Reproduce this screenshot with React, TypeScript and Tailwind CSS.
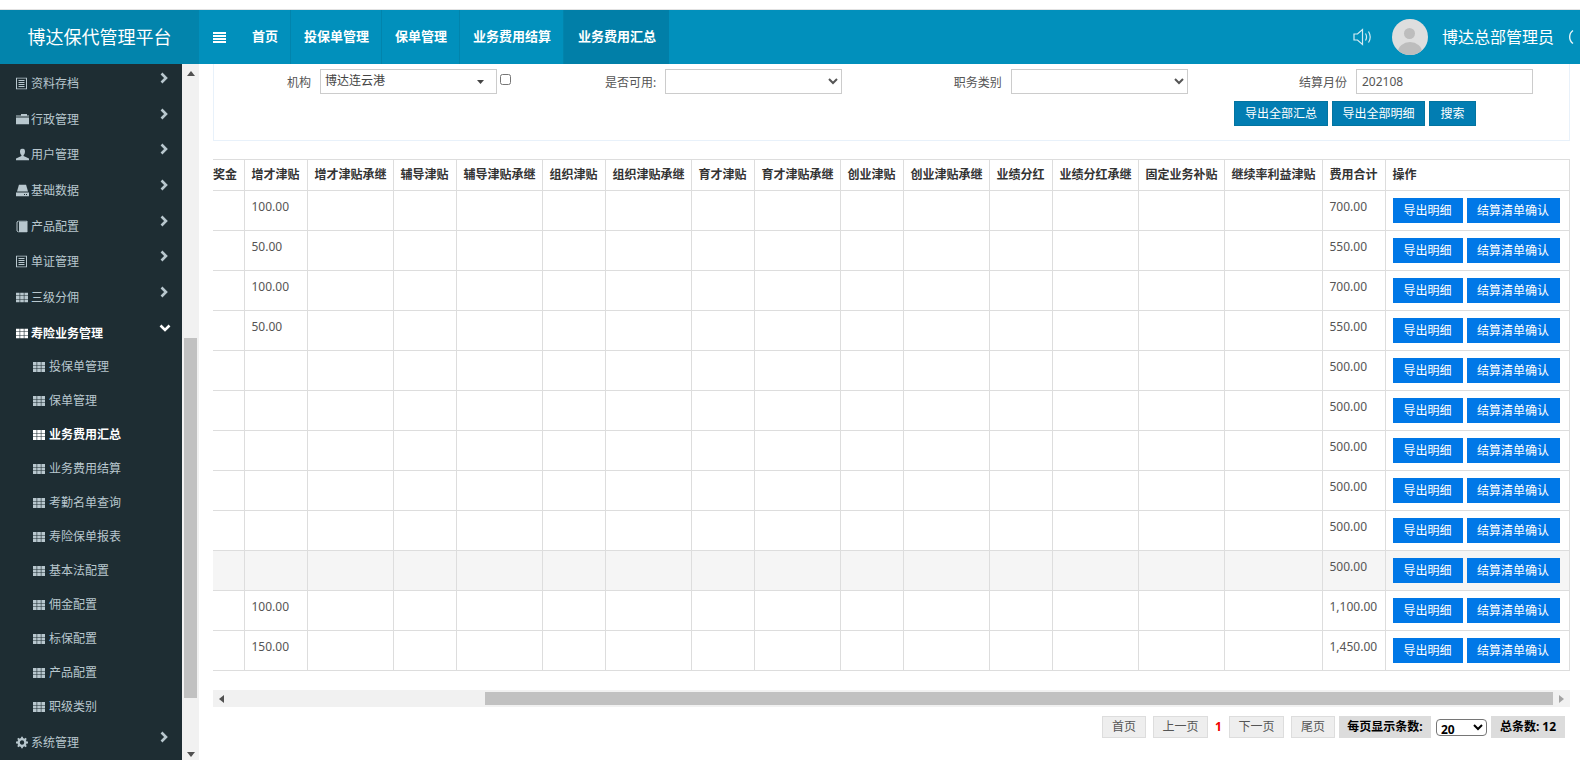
import React from "react";

const FONT = '"Noto Sans", "Noto Sans CJK SC", sans-serif';

function Th({ active }: { active?: boolean }) {
  const c = active ? "#ffffff" : "#b8c7ce";
  const xs = [0, 4.2, 8.4];
  const ys = [0, 3.5, 7];
  return (
    <svg width="12" height="10" viewBox="0 0 12 10" className="shrink-0">
      {xs.map((x) => ys.map((y) => <rect key={`${x}-${y}`} x={x} y={y} width="3.6" height="3" fill={c} />))}
    </svg>
  );
}
function ListAlt() {
  return (
    <svg width="12" height="12" viewBox="0 0 12 12" className="shrink-0">
      <rect x="0.5" y="0.5" width="10" height="11" fill="none" stroke="#b8c7ce" />
      <path d="M2.5 3h6M2.5 5h6M2.5 7h6M2.5 9h6" stroke="#b8c7ce" />
    </svg>
  );
}
function Folder() {
  return (
    <svg width="13" height="11" viewBox="0 0 13 11" className="shrink-0">
      <path d="M1 2h4V0.5h6V2h2v1H0V2z M0 4h13v7H0z" fill="#b8c7ce" />
    </svg>
  );
}
function User() {
  return (
    <svg width="13" height="12" viewBox="0 0 13 12" className="shrink-0">
      <path d="M6.500 0C8.200 0 9 1.300 9 3c0 1.500-.6 3-1.400 3.600v1L13 10v2H0v-2l5.400-2.400v-1C4.600 6 4 4.500 4 3c0-1.700.8-3 2.500-3z" fill="#b8c7ce" />
    </svg>
  );
}
function Hdd() {
  return (
    <svg width="13" height="12" viewBox="0 0 13 12" className="shrink-0">
      <path d="M3 0h7l2 7H1z" fill="#b8c7ce" />
      <rect x="0" y="8" width="13" height="4" fill="#b8c7ce" />
      <rect x="8" y="9.500" width="1" height="1" fill="#1e2d33" />
      <rect x="10" y="9.500" width="1" height="1" fill="#1e2d33" />
    </svg>
  );
}
function Book() {
  return (
    <svg width="12" height="12" viewBox="0 0 12 12" className="shrink-0">
      <path d="M1 1.500L2.500 0.500H11V11.500H2.500L1 10.500z" fill="none" stroke="#b8c7ce" />
      <rect x="3" y="1" width="8" height="10.500" fill="#b8c7ce" />
    </svg>
  );
}
function Cog() {
  return (
    <svg width="12" height="12" viewBox="0 0 12 12" className="shrink-0">
      <circle cx="6" cy="6" r="3.400" fill="none" stroke="#b8c7ce" strokeWidth="2.400" />
      <path d="M6 0v2.400M6 9.600V12M0 6h2.400M9.600 6H12M1.800 1.800l1.700 1.700M8.500 8.500l1.700 1.700M10.200 1.800L8.500 3.500M3.500 8.500l-1.700 1.700" stroke="#b8c7ce" strokeWidth="1.800" />
    </svg>
  );
}
function ChevronR() {
  return (
    <svg width="8" height="12" viewBox="0 0 8 12" className="shrink-0 -translate-y-1">
      <path d="M1.500 1.500L6 6l-4.500 4.500" fill="none" stroke="#b8c7ce" strokeWidth="2.600" />
    </svg>
  );
}
function ChevronD() {
  return (
    <svg width="12" height="8" viewBox="0 0 12 8" className="shrink-0 -translate-y-1">
      <path d="M1.500 1.500L6 6l4.500-4.500" fill="none" stroke="#ffffff" strokeWidth="2.600" />
    </svg>
  );
}

function Top({ icon, label, open }: { icon: React.ReactNode; label: string; open?: boolean }) {
  return (
    <div className={`flex h-[35.7px] items-center pl-4 ${open ? "pr-[11px] text-white font-bold" : "pr-[14px] text-[#b8c7ce]"}`}>
      <span className="flex w-[15px] shrink-0 translate-y-[1.5px] items-center">{icon}</span>
      <span className="flex-1 translate-y-[1.5px]">{label}</span>
      {open ? <ChevronD /> : <ChevronR />}
    </div>
  );
}
function Child({ label, active }: { label: string; active?: boolean }) {
  return (
    <div className={`flex h-[34px] items-center gap-1 pl-[33px] ${active ? "text-white font-bold" : "text-[#b8c7ce]"}`}>
      <Th active={active} />
      <span>{label}</span>
    </div>
  );
}

const NAV = ["首页", "投保单管理", "保单管理", "业务费用结算"];
const COLS = ["w-[31px]", "w-[63px]", "w-[86px]", "w-[63px]", "w-[86px]", "w-[63px]", "w-[86px]", "w-[63px]", "w-[86px]", "w-[63px]", "w-[86px]", "w-[63px]", "w-[86px]", "w-[86px]", "w-[98px]", "w-[63px]", "w-[184px]"];
const HEAD = ["奖金", "增才津贴", "增才津贴承继", "辅导津贴", "辅导津贴承继", "组织津贴", "组织津贴承继", "育才津贴", "育才津贴承继", "创业津贴", "创业津贴承继", "业绩分红", "业绩分红承继", "固定业务补贴", "继续率利益津贴", "费用合计", "操作"];
const ROWS: [string, string][] = [
  ["100.00", "700.00"], ["50.00", "550.00"], ["100.00", "700.00"], ["50.00", "550.00"],
  ["", "500.00"], ["", "500.00"], ["", "500.00"], ["", "500.00"], ["", "500.00"], ["", "500.00"],
  ["100.00", "1,100.00"], ["150.00", "1,450.00"],
];

function Field({ label, children }: { label: string; children: React.ReactNode }) {
  return (
    <div className="flex items-center">
      <span className="w-[88px] shrink-0 translate-y-px text-right leading-[25px] text-[#555]">{label}</span>
      <span className="w-[9px] shrink-0" />
      {children}
    </div>
  );
}

const selectCls = "h-[25px] w-[177px] border border-[#ccc] bg-white text-xs text-[#555]";

export default function App() {
  return (
    <div className="h-[760px] w-full overflow-hidden bg-white text-xs" style={{ fontFamily: FONT }}>
      <div className="h-[10px] border-b border-[#e2e2e2]" />
      <header className="flex h-[54px] items-center overflow-hidden bg-[#0190bc] text-white">
        <div className="flex h-full w-[199px] shrink-0 items-center justify-center bg-[#0284ac] text-lg">博达保代管理平台</div>
        <div className="flex h-full w-[40px] shrink-0 items-center pl-[14px]">
          <svg width="13" height="11" viewBox="0 0 13 11">
            <path d="M0 0h13v2H0zM0 3h13v2H0zM0 6h13v2H0zM0 9h13v2H0z" fill="#fff" />
          </svg>
        </div>
        {NAV.map((n) => (
          <div key={n} className="flex h-full items-center border-r border-[#0284ac] pl-[13px] pr-[12px] text-[13px] font-bold">{n}</div>
        ))}
        <div className="flex h-full items-center bg-[#017fa8] pl-[14px] pr-[13px] text-[13px] font-bold">业务费用汇总</div>
        <div className="flex-1" />
        <svg width="20" height="20" viewBox="0 0 20 20" className="shrink-0" fill="none" stroke="#d5ebf3" strokeWidth="1.200">
          <path d="M1 7h3.500L9.500 2.500v15L4.500 13H1z" />
          <path d="M12.500 6.500c1.200 2 1.200 5 0 7M15.500 4.500c2 3.200 2 7.800 0 11" />
        </svg>
        <div className="relative ml-[19px] h-9 w-9 shrink-0 overflow-hidden rounded-full bg-[#dedede]">
          <div className="absolute left-[12.500px] top-[9px] h-[11px] w-[11px] rounded-full bg-[#bdbdbd]" />
          <div className="absolute left-[6px] top-[23px] h-[20px] w-[24px] rounded-[50%] bg-[#bdbdbd]" />
        </div>
        <span className="ml-[14px] text-base">博达总部管理员</span>
        <svg width="26" height="20" viewBox="0 0 26 20" className="ml-[14px] mr-[-14px] shrink-0" fill="none" stroke="#e6f4f8" strokeWidth="1.400">
          <path d="M5 3.500A8 8 0 0 0 5 16.500" />
        </svg>
      </header>
      <div className="flex h-[696px]">
        <aside className="w-[182px] shrink-0 overflow-hidden bg-[#1e2d33]">
          <Top icon={<ListAlt />} label="资料存档" />
          <Top icon={<Folder />} label="行政管理" />
          <Top icon={<User />} label="用户管理" />
          <Top icon={<Hdd />} label="基础数据" />
          <Top icon={<Book />} label="产品配置" />
          <Top icon={<ListAlt />} label="单证管理" />
          <Top icon={<Th />} label="三级分佣" />
          <Top icon={<Th active />} label="寿险业务管理" open />
          <Child label="投保单管理" />
          <Child label="保单管理" />
          <Child label="业务费用汇总" active />
          <Child label="业务费用结算" />
          <Child label="考勤名单查询" />
          <Child label="寿险保单报表" />
          <Child label="基本法配置" />
          <Child label="佣金配置" />
          <Child label="标保配置" />
          <Child label="产品配置" />
          <Child label="职级类别" />
          <Top icon={<Cog />} label="系统管理" />
        </aside>
        <div className="flex w-[17px] shrink-0 flex-col items-center bg-[#f1f1f1]">
          <svg width="8" height="5" viewBox="0 0 8 5" className="mt-[7px] shrink-0"><path d="M4 0l4 5H0z" fill="#505050" /></svg>
          <div className="mt-[262px] h-[360px] w-[13px] shrink-0 bg-[#c1c1c1]" />
          <svg width="8" height="5" viewBox="0 0 8 5" className="mt-[54px] shrink-0"><path d="M4 5L0 0h8z" fill="#505050" /></svg>
        </div>
        <main className="w-[1381px] overflow-hidden pl-[14px] pr-[10px]">
          <section className="border-x border-b border-[#e8f1fa] pb-[14px] pt-[5px]">
            <div className="grid grid-cols-[repeat(4,345.33px)] pl-[9px]">
              <Field label="机构">
                <div className="flex h-[25px] w-[177px] items-center justify-between border border-[#ccc] pl-[4px] pr-[12px] text-[#444]">
                  <span className="-translate-y-px">博达连云港</span>
                  <svg width="7" height="4" viewBox="0 0 7 4"><path d="M0 0h7L3.500 4z" fill="#444" /></svg>
                </div>
                <input type="checkbox" className="ml-[3px] h-[11px] w-[11px] -translate-y-[2px]" />
              </Field>
              <Field label="是否可用:">
                <select className={selectCls}><option></option></select>
              </Field>
              <Field label="职务类别">
                <select className={selectCls}><option></option></select>
              </Field>
              <Field label="结算月份">
                <input readOnly value="202108" className="h-[25px] w-[177px] border border-[#ccc] px-[5px] text-xs text-[#555]" />
              </Field>
            </div>
            <div className="mt-[7px] flex justify-end gap-1 pr-[93px]">
              {[["导出全部汇总", "w-[94px]"], ["导出全部明细", "w-[93px]"], ["搜索", "w-[47px]"]].map(([t, w]) => (
                <button key={t} className={`h-[25px] border border-[#0374a0] bg-[#027db2] text-xs text-white ${w}`}>{t}</button>
              ))}
            </div>
          </section>
          <div className="mt-[18px] overflow-hidden">
            <table className="w-[1356px] table-fixed border-collapse text-[#555]">
              <colgroup>
                {COLS.map((c, i) => <col key={i} className={c} />)}
              </colgroup>
              <thead>
                <tr className="h-[31px]">
                  {HEAD.map((h, i) => (
                    <th key={h} className={`whitespace-nowrap border border-[#dddddd] text-left text-xs font-bold text-[#333] ${i === 0 ? "border-l-0 pl-0" : "pl-[7px]"}`}>{h}</th>
                  ))}
                </tr>
              </thead>
              <tbody>
                {ROWS.map(([a, total], r) => (
                  <tr key={r} className={`h-10 ${r === 9 ? "bg-[#f5f5f5]" : ""}`}>
                    {HEAD.map((h, i) => {
                      if (i === 16) {
                        return (
                          <td key={h} className="border border-[#dddddd] pl-[7px] align-middle">
                            <div className="flex gap-1">
                              <button className="h-[25px] w-[70px] bg-[#0078e7] text-xs text-white">导出明细</button>
                              <button className="h-[25px] w-[93px] bg-[#0078e7] text-xs text-white">结算清单确认</button>
                            </div>
                          </td>
                        );
                      }
                      const v = i === 1 ? a : i === 15 ? total : "";
                      return (
                        <td key={h} className={`border border-[#dddddd] pl-[7px] pt-[7px] align-top leading-[17px] ${i === 0 ? "border-l-0" : ""}`}>{v}</td>
                      );
                    })}
                  </tr>
                ))}
              </tbody>
            </table>
          </div>
          <div className="mt-[19px] flex h-[17px] w-[1357px] items-center bg-[#f1f1f1]">
            <span className="flex w-[17px] shrink-0 justify-center">
              <svg width="5" height="8" viewBox="0 0 5 8"><path d="M0 4l5-4v8z" fill="#505050" /></svg>
            </span>
            <span className="w-[255px] shrink-0" />
            <div className="h-[13px] w-[1068px] shrink-0 bg-[#c1c1c1]" />
            <span className="flex w-[17px] shrink-0 justify-center">
              <svg width="5" height="8" viewBox="0 0 5 8"><path d="M5 4L0 0v8z" fill="#a3a3a3" /></svg>
            </span>
          </div>
          <div className="mt-[9px] flex h-[22px] w-[1352px] items-center justify-end">
            {[["首页", "w-[44px]", "ml-0"], ["上一页", "w-[55px]", "ml-[7px]"]].map(([t, w, m]) => (
              <span key={t} className={`flex h-[22px] items-center justify-center border border-[#ddd] bg-[#eee] text-[#555] ${w} ${m}`}>{t}</span>
            ))}
            <span className="w-[21px] text-center font-bold text-[#f00000]">1</span>
            {[["下一页", "w-[55px]", "ml-0"], ["尾页", "w-[44px]", "ml-[7px]"]].map(([t, w, m]) => (
              <span key={t} className={`flex h-[22px] items-center justify-center border border-[#ddd] bg-[#eee] text-[#555] ${w} ${m}`}>{t}</span>
            ))}
            <span className="ml-1 flex h-[22px] w-[92px] items-center justify-center bg-[#dcdcdc] font-bold text-black">每页显示条数:</span>
            <select className="ml-[5px] h-[17px] w-[51px] rounded-sm border border-[#767676] bg-white text-xs font-bold text-black">
              <option>20</option>
            </select>
            <span className="ml-[4px] flex h-[22px] w-[74px] items-center justify-center bg-[#dcdcdc] font-bold text-black">总条数: 12</span>
          </div>
        </main>
      </div>
    </div>
  );
}
